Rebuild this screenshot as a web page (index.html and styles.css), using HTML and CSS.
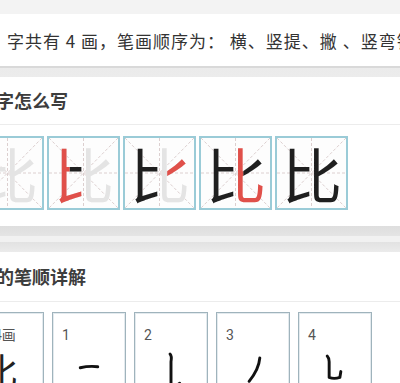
FILE: index.html
```html
<!DOCTYPE html>
<html lang="zh-CN">
<head>
    <meta charset="UTF-8">
    <meta name="viewport" content="width=device-width, initial-scale=1.0">
    <title>比字的笔顺</title>
    <link rel="stylesheet" href="styles.css">
</head>
<body>
    <div class="top-band"></div>

    <section class="summary">
        <p>字共有 4 画，笔画顺序为： 横、竖提、撇 、竖弯钩</p>
    </section>

    <div class="sep sep-thin"></div>

    <section class="card">
        <h2 class="card-title title-write">比字怎么写</h2>
        <div class="grid-row">
            <div class="grid-box">
                <svg class="guides" viewBox="0 0 100 100" preserveAspectRatio="none"><line x1="0" y1="0" x2="100" y2="100"/><line x1="100" y1="0" x2="0" y2="100"/><line x1="50" y1="0" x2="50" y2="100"/><line x1="0" y1="50" x2="100" y2="50"/></svg>
                <span class="glyph ghost">比</span>
            </div>
            <div class="grid-box">
                <svg class="guides" viewBox="0 0 100 100" preserveAspectRatio="none"><line x1="0" y1="0" x2="100" y2="100"/><line x1="100" y1="0" x2="0" y2="100"/><line x1="50" y1="0" x2="50" y2="100"/><line x1="0" y1="50" x2="100" y2="50"/></svg>
                <span class="glyph ghost">比</span>
                <span class="glyph done clip-heng">比</span>
                <span class="glyph current clip-shuti">比</span>
            </div>
            <div class="grid-box">
                <svg class="guides" viewBox="0 0 100 100" preserveAspectRatio="none"><line x1="0" y1="0" x2="100" y2="100"/><line x1="100" y1="0" x2="0" y2="100"/><line x1="50" y1="0" x2="50" y2="100"/><line x1="0" y1="50" x2="100" y2="50"/></svg>
                <span class="glyph ghost">比</span>
                <span class="glyph done clip-left">比</span>
                <span class="glyph current clip-pie">比</span>
            </div>
            <div class="grid-box">
                <svg class="guides" viewBox="0 0 100 100" preserveAspectRatio="none"><line x1="0" y1="0" x2="100" y2="100"/><line x1="100" y1="0" x2="0" y2="100"/><line x1="50" y1="0" x2="50" y2="100"/><line x1="0" y1="50" x2="100" y2="50"/></svg>
                <span class="glyph done clip-left">比</span>
                <span class="glyph done clip-pie">比</span>
                <span class="glyph current clip-swg">比</span>
            </div>
            <div class="grid-box">
                <svg class="guides" viewBox="0 0 100 100" preserveAspectRatio="none"><line x1="0" y1="0" x2="100" y2="100"/><line x1="100" y1="0" x2="0" y2="100"/><line x1="50" y1="0" x2="50" y2="100"/><line x1="0" y1="50" x2="100" y2="50"/></svg>
                <span class="glyph done">比</span>
            </div>
        </div>
    </section>

    <div class="sep sep-wide"></div>

    <section class="card">
        <h2 class="card-title title-detail">比字的笔顺详解</h2>
        <div class="stroke-row">
            <div class="stroke-box">
                <span class="stroke-num">共4画</span>
                <span class="stroke-char">比</span>
            </div>
            <div class="stroke-box">
                <span class="stroke-num">1</span>
                <svg class="stroke-pic" viewBox="0 0 74 90"><path d="M28 56 Q37 54 46 55"/></svg>
            </div>
            <div class="stroke-box">
                <span class="stroke-num">2</span>
                <svg class="stroke-pic" viewBox="0 0 74 90"><path d="M36 42 Q38 44 37 50 L37 78 L46 72"/></svg>
            </div>
            <div class="stroke-box">
                <span class="stroke-num">3</span>
                <svg class="stroke-pic" viewBox="0 0 74 90"><path d="M44 46 Q43 58 33 70"/></svg>
            </div>
            <div class="stroke-box">
                <span class="stroke-num">4</span>
                <svg class="stroke-pic" viewBox="0 0 74 90"><path d="M29 44 Q31 46 31 50 L31 66 Q36 68 42 66 L43 60"/></svg>
            </div>
        </div>
    </section>
</body>
</html>
```

FILE: styles.css
```css
body {
    margin: 0;
    width: 400px;
    overflow: hidden;
    background-color: #ffffff;
    font-family: "Noto Sans CJK SC", "Noto Sans", sans-serif;
    color: #333;
}

.top-band {
    height: 14px;
    background-color: #f3f3f3;
}

.summary {
    height: 52px;
    display: flex;
    align-items: center;
    padding-left: 7px;
    white-space: nowrap;
    overflow: hidden;
}

.summary p {
    margin: 0;
    font-size: 17px;
    letter-spacing: 1px;
    color: #333;
}

/* gray gaps between the cards */
.sep-thin {
    height: 11px;
    background: linear-gradient(#d9d9d9 0, #d9d9d9 2px, #ebebeb 2px, #ececec 100%);
}

.sep-wide {
    height: 26px;
    background: linear-gradient(#dedede 0, #e4e4e4 10px, #f1f1f1 10px, #f1f1f1 16px, #e2e2e2 16px, #ebebeb 100%);
}

.card {
    background-color: #fff;
}

.card-title {
    margin: 0;
    font-size: 18px;
    font-weight: bold;
    color: #3d3d3d;
    white-space: nowrap;
    overflow: hidden;
    border-bottom: 1px solid #ececec;
}

.title-write {
    height: 47px;
    line-height: 47px;
    text-indent: -22px;
}

.title-detail {
    height: 49px;
    line-height: 49px;
    text-indent: -40px;
}

/* 田字格 */
.grid-row {
    display: flex;
    gap: 3px;
    margin-left: -29px;
    padding: 11px 0 16px;
}

.grid-box {
    position: relative;
    flex: 0 0 73px;
    height: 74px;
    box-sizing: border-box;
    border: 2px solid #9acbd7;
    background-color: #fdfdfd;
}

.guides {
    position: absolute;
    inset: 0;
    width: 100%;
    height: 100%;
}

.guides line {
    stroke: #dccfcf;
    stroke-width: 1;
    stroke-dasharray: 3 2;
    vector-effect: non-scaling-stroke;
}

.glyph {
    position: absolute;
    left: 5px;
    top: 4px;
    width: 60px;
    height: 62px;
    font-size: 60px;
    line-height: 62px;
    text-align: center;
}

.ghost { color: #e4e4e4; }
.done { color: #1f1f1f; }
.current { color: #e0504a; }

.clip-left { clip-path: inset(0 50% 0 0); }
.clip-heng { clip-path: polygon(26% 30%, 50% 30%, 50% 58%, 26% 58%); }
.clip-shuti { clip-path: polygon(0 0, 50% 0, 50% 30%, 26% 30%, 26% 58%, 50% 58%, 50% 100%, 0 100%); }
.clip-pie { clip-path: polygon(62% 0, 100% 0, 100% 56%, 62% 56%); }
.clip-swg { clip-path: polygon(50% 0, 62% 0, 62% 56%, 100% 56%, 100% 100%, 50% 100%); }

/* 笔顺详解 */
.stroke-row {
    display: flex;
    gap: 8px;
    margin-left: -30px;
    padding-top: 10px;
}

.stroke-box {
    position: relative;
    flex: 0 0 74px;
    height: 90px;
    box-sizing: border-box;
    border: 1px solid #9fb3bc;
    box-shadow: inset 0 0 0 1px #e3eaee;
}

.stroke-num {
    display: block;
    padding: 13px 0 0 9px;
    font-family: "Roboto", "Noto Sans CJK SC", sans-serif;
    font-size: 14px;
    line-height: 18px;
    color: #555;
}

.stroke-char {
    display: block;
    margin-top: 4px;
    padding-left: 9px;
    font-size: 38px;
    line-height: 44px;
    color: #222;
}

.stroke-pic {
    position: absolute;
    inset: 0;
    width: 100%;
    height: 100%;
}

.stroke-pic path {
    fill: none;
    stroke: #111;
    stroke-width: 3;
    stroke-linecap: round;
    stroke-linejoin: round;
}
```
